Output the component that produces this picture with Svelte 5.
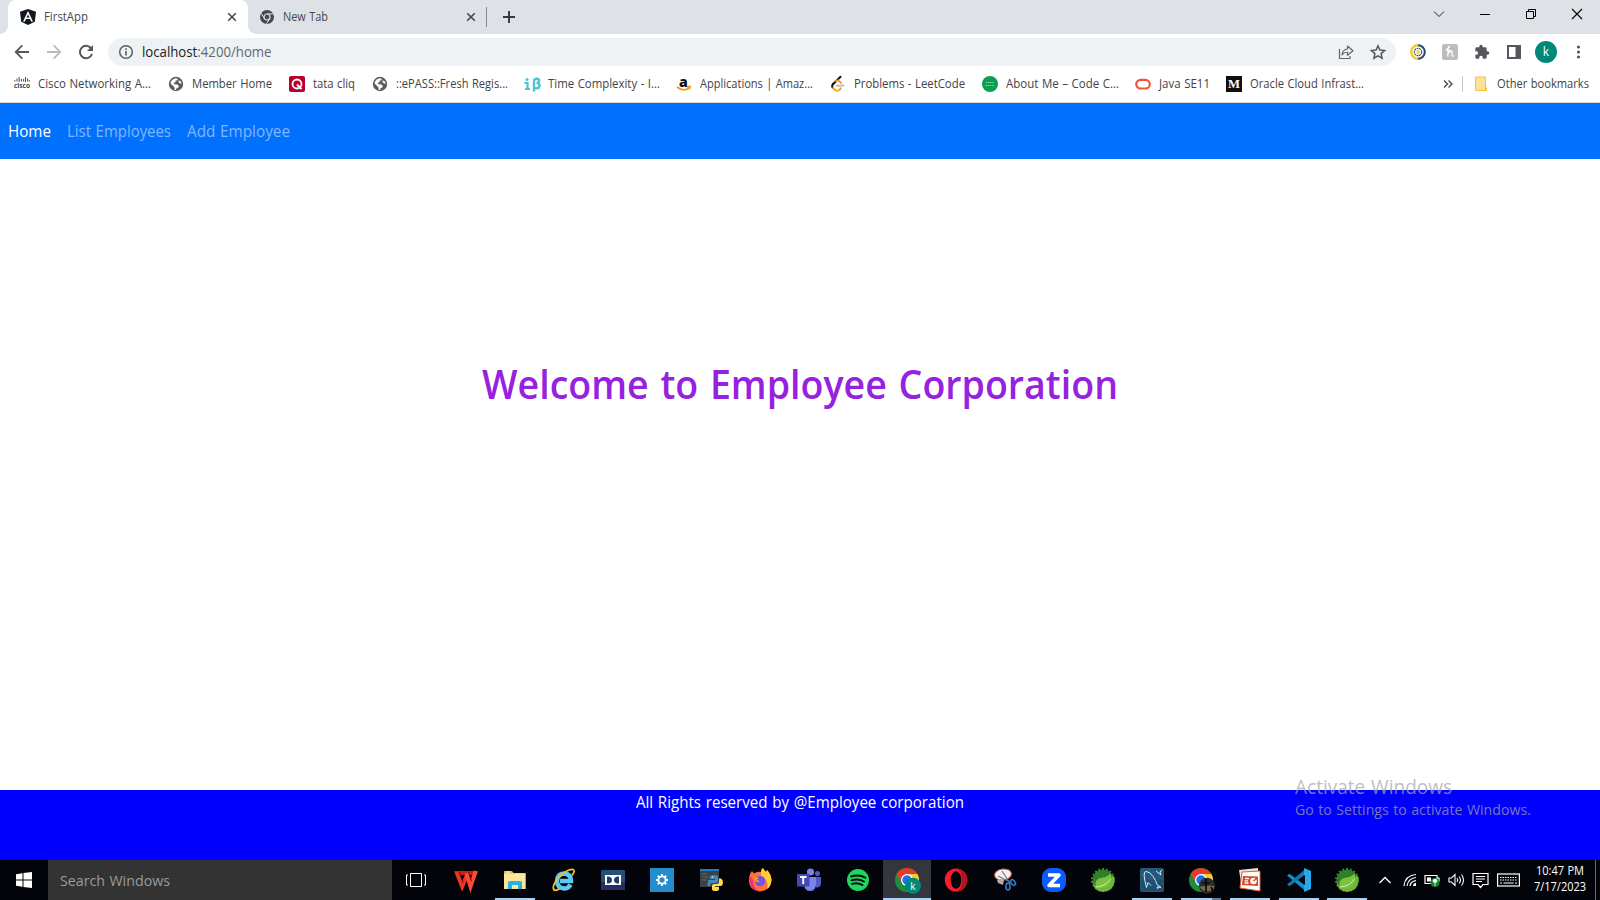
<script>
  // Condenses or widens a label so that it takes a given width in pixels.
  function fit(node, width) {
    const natural = node.getBoundingClientRect().width;
    node.style.transform = 'scaleX(' + width / natural + ')';
    node.style.marginRight = width - natural + 'px';
  }

  const bookmarks = [
    { icon: 'cisco', text: 'Cisco Networking A...', w: 113, box: 114 },
    { icon: 'globe', text: 'Member Home', w: 80, box: 81 },
    { icon: 'tata', text: 'tata cliq', w: 42, box: 43 },
    { icon: 'globe', text: '::ePASS::Fresh Regis...', w: 112, box: 112 },
    { icon: 'ib', text: 'Time Complexity - I...', w: 112, box: 112 },
    { icon: 'amazon', text: 'Applications | Amaz...', w: 113, box: 114 },
    { icon: 'leet', text: 'Problems - LeetCode', w: 111, box: 112 },
    { icon: 'cc', text: 'About Me – Code C...', w: 113, box: 113 },
    { icon: 'java', text: 'Java SE11', w: 51, box: 51 },
    { icon: 'medium', text: 'Oracle Cloud Infrast...', w: 114, box: 114 }
  ];

  const apps = [
    { icon: 'taskview' },
    { icon: 'wps' },
    { icon: 'folder', open: true },
    { icon: 'ie' },
    { icon: 'dolby' },
    { icon: 'gear' },
    { icon: 'python' },
    { icon: 'firefox' },
    { icon: 'teams' },
    { icon: 'spotify' },
    { icon: 'chromek', open: true, active: true },
    { icon: 'opera' },
    { icon: 'snip' },
    { icon: 'zoom' },
    { icon: 'spring' },
    { icon: 'mysql', open: true },
    { icon: 'chromeb', open: true, multi: true },
    { icon: 'ppt', open: true },
    { icon: 'code', open: true },
    { icon: 'spring', open: true }
  ];
  const teeth = Array.from({ length: 18 }, (_, i) => i * 20);
</script>

{#snippet cross()}
  <svg width="10" height="10" viewBox="0 0 10 10"><path d="M1.2 1.2l7.6 7.6M8.8 1.2L1.2 8.8" stroke="#45484d" stroke-width="1.6" /></svg>
{/snippet}

{#snippet chrome()}
  <circle cx="12" cy="12" r="12" fill="#1e8e3e" />
  <path d="M12 6h10.4A12 12 0 0 1 12 24l5.2-9z" fill="#fcc934" />
  <path d="M1.6 6A12 12 0 0 1 22.4 6H12L6.800 15z" fill="#e33b2e" />
  <circle cx="12" cy="12" r="6" fill="#fff" />
  <circle cx="12" cy="12" r="4.700" fill="#1a73e8" />
{/snippet}

{#snippet bookmarkIcon(name)}
  <svg width="16" height="16" viewBox="0 0 16 16">
    {#if name === 'cisco'}
      <path d="M.8 4v1.500M3 2.500v3M5.200 1v5M7.400 3v2.500M9.600 3v2.500M11.500 1v5M13.500 2.500v3M15.300 4v1.500" stroke="#4a4a4a" stroke-width="1" />
      <text x="0" y="12" font-size="7" font-weight="700" fill="#444" textLength="16" lengthAdjust="spacingAndGlyphs">cisco</text>
    {:else if name === 'globe'}
      <circle cx="8" cy="8" r="7.200" fill="#5a5e63" />
      <path d="M7.500 2.300l2.300.4-.4 1.500-2 .5.2 1.600-2.200.7 1 1.300 3 .2 1.500 1.400-.8 1.800-1.600.6-.5 1.800-1.400-.2v-2.200L5 9.800 2.500 7.500l.6-2.200 2-2z" fill="#fff" />
      <path d="M10.500 4.500l2 .4 1.200 2.800-1.700-.2-1.500-1.500z" fill="#fff" />
    {:else if name === 'tata'}
      <rect width="16" height="16" rx="2" fill="#b9002b" />
      <circle cx="8" cy="8" r="4.500" fill="none" stroke="#fff" stroke-width="1.800" />
      <path d="M8 8.500l4.600 4.700" stroke="#fff" stroke-width="1.900" />
    {:else if name === 'ib'}
      <path d="M.5 7h3v6M1 13h5" stroke="#4bc4d3" stroke-width="2.200" fill="none" />
      <circle cx="3" cy="3.500" r="1.500" fill="#4bc4d3" />
      <path d="M10 15.500V5q0-2.300 2.500-2.300t2.500 2.100q0 2-2.500 2.200 3.200 0 3 2.800-.5 2.700-3 2.500-1.600 0-2.500-1" stroke="#4bc4d3" stroke-width="2.400" fill="none" />
    {:else if name === 'amazon'}
      <text x="3" y="10.500" font-size="14" font-weight="800" fill="#111">a</text>
      <path d="M1 11q6.500 5 12 1.200M11 10.800l3-.4-.5 2.800" stroke="#f7981d" stroke-width="1.700" fill="none" />
    {:else if name === 'leet'}
      <path d="M10.500.8L3 8.300" stroke="#111" stroke-width="2" stroke-linecap="round" />
      <path d="M3.500 7.500Q.8 10 3.300 12.200" stroke="#111" stroke-width="2" fill="none" />
      <path d="M3.200 12l2 2q2 1.500 4 0l1.700-1.700M6.200 5.200q1.800-1.300 3.500.3l1.500 1.500" stroke="#f5a623" stroke-width="2" fill="none" stroke-linecap="round" />
      <path d="M6.500 9.700h7" stroke="#b8b8b8" stroke-width="1.800" stroke-linecap="round" />
    {:else if name === 'cc'}
      <circle cx="8" cy="8" r="8" fill="#0a9e50" />
      <path d="M4 6.500h8M3.500 9.500h9" stroke="#7fd5a6" stroke-width="1.200" stroke-dasharray="1.500 .6" />
    {:else if name === 'java'}
      <rect x="1.200" y="3.900" width="13.600" height="8.600" rx="4.300" fill="none" stroke="#f8503f" stroke-width="2.200" />
    {:else if name === 'medium'}
      <rect width="16" height="16" fill="#12100e" />
      <text x="2" y="12" class="serif" font-size="12.500" font-weight="700" fill="#fff" textLength="12" lengthAdjust="spacingAndGlyphs">M</text>
    {/if}
  </svg>
{/snippet}

{#snippet appIcon(name)}
  <svg width="24" height="24" viewBox="0 0 24 24">
    {#if name === 'taskview'}
      <path d="M6.500 5.500h11v13h-11zM4 7H2.500v10H4M20 7h1.500v10H20" fill="none" stroke="#fff" />
    {:else if name === 'wps'}
      <path d="M0 3h24l-1.500 4H3.500L2 7z" fill="#c81d12" />
      <path d="M2.500 4L8.200 18.500 13 7" fill="none" stroke="#f03524" stroke-width="4" />
      <path d="M12.500 5l4 13.500L21.800 3" fill="none" stroke="#ff4a33" stroke-width="4" />
      <path d="M4.800 4l4.500 11M14.500 4l3 9" stroke="#6f0d08" stroke-width="1" />
    {:else if name === 'folder'}
      <path d="M1 3h8l1.500 2H22.500v16H1z" fill="#e9b93d" />
      <path d="M1 5.500h21.500V21H1z" fill="#fce69a" />
      <path d="M5 21v-6q0-2 2-2h10q2 0 2 2v6h-4v-4H9v4z" fill="#28afe8" />
      <path d="M3 4h4" stroke="#fff" />
    {:else if name === 'ie'}
      <path d="M18.500 16.500Q16.500 20.500 12 20.500 5.200 20 5 13 5.500 5.800 12 5.500q7 .5 7 7.500H8" fill="none" stroke="#5cc8f3" stroke-width="4.500" />
      <path d="M20 7.500Q24 2 20.500 1.400 16 1 8 8 0 17 1.500 21q1.500 3 6-.5" fill="none" stroke="#f3c32b" stroke-width="1.800" />
    {:else if name === 'dolby'}
      <rect y="2" width="24" height="20" rx="1" fill="#245078" />
      <path d="M0 14h24v8H0z" fill="#282d65" />
      <rect x="4" y="7" width="16" height="10" fill="#fff" />
      <path d="M6 8.500h1.500q3.500.5 3.500 3.500t-3.500 3.500H6zM18 8.500h-1.500q-3.500.5-3.500 3.500t3.500 3.500H18z" fill="#203d68" />
    {:else if name === 'gear'}
      <rect width="24" height="24" fill="#248dcd" />
      {#each [0, 45, 90, 135, 180, 225, 270, 315] as a}
        <rect x="11" y="6" width="2" height="3" fill="#fff" transform="rotate({a} 12 12)" />
      {/each}
      <circle cx="12" cy="12" r="3.600" fill="none" stroke="#fff" stroke-width="1.800" />
    {:else if name === 'python'}
      <path d="M1 1h19v18H1z" fill="#3c4146" /><path d="M1 1h19v2H1z" fill="#1682c5" />
      <path d="M3 6h5M4 9h6M3 12h4" stroke="#54764b" />
      <path d="M9 15v-3h7v-1h-5V9q0-2 4-2t4 2v4q0 2-2 2h-4q-2 0-2 3H9q-1-.5-1-2z" fill="#4588be" />
      <path d="M20 10.500h2q2 1 2 4t-2 3.500h-6v1h4v2q0 2-3.500 2T13 21v-3q0-2 2-2h3q2 0 2-2z" fill="#ffda4b" />
      <circle cx="13.300" cy="9" r=".7" fill="#fff" />
    {:else if name === 'firefox'}
      <path d="M2 6q1-1.500 2-3l2 2.500q3-2.500 7-1.500 0-3 2-4 1 2.500 3 4 1-1 1-2 4 4 4.500 10Q23 22 12 23.500 1 22.500 1 12.500 1 9 2 6z" fill="#ff7139" />
      <path d="M13 4q0-3 2-4 1 2.500 3 4l1-2q4 4 4.500 10-.5 6.500-4.500 9 1.500-6-1-9-2-3-5-3z" fill="#ffcf35" />
      <path d="M2 8q-2 13 9 15.500Q4 19 5 12z" fill="#f52b70" />
      <circle cx="12" cy="13" r="5.300" fill="#7353e4" /><path d="M6 8q2 2 5 1.500L9 12l3 1.500Q9 16 6 12z" fill="#ff8d30" />
    {:else if name === 'teams'}
      <circle cx="13.500" cy="4" r="3.600" fill="#7b83eb" /><circle cx="20.500" cy="5.500" r="2.500" fill="#5059c9" />
      <path d="M17 9h7v7q-1 4-5 3.500z" fill="#5059c9" /><path d="M7 9h12v8q-1 6-6 6t-6-6z" fill="#7b83eb" />
      <rect y="6" width="12.500" height="12.500" rx="1" fill="#4049b4" /><path d="M3 9h6.500M6.200 9v7" stroke="#fff" stroke-width="1.900" />
    {:else if name === 'spotify'}
      <circle cx="12" cy="12" r="11" fill="#1ed760" />
      <path d="M5 8.500q8-2.500 14.500 1.300M5.500 12.300q7-2 12.500 1.200M6 15.800q6-1.500 10.500 1.200" fill="none" stroke="#050c08" stroke-width="1.900" stroke-linecap="round" />
    {:else if name === 'chromek'}
      {@render chrome()}
      <circle cx="18" cy="17.800" r="8" fill="#00897b" /><text x="15.300" y="21.500" font-size="10" fill="#fff">k</text>
    {:else if name === 'opera'}
      <ellipse cx="12" cy="12" rx="11.200" ry="11.500" fill="#f91d2d" />
      <path d="M12 .5a11.500 11.500 0 0 1 0 23q6-2 6-11.500T12 .5" fill="#b4131f" /><ellipse cx="12" cy="12" rx="5.300" ry="8.700" fill="#020407" />
    {:else if name === 'snip'}
      <ellipse cx="10" cy="6.500" rx="8.500" ry="5.500" fill="#f6f1f1" stroke="#c94b48" transform="rotate(-8 10 6.500)" />
      <path d="M9 3l8 12M5 8l12 6" stroke="#707580" stroke-width="1.200" />
      <path d="M4 12q4-2 7 0l-1 5-5-2z" fill="#b8aaa9" />
      <ellipse cx="20" cy="14.500" rx="2" ry="3" fill="none" stroke="#2b7cc4" stroke-width="1.700" transform="rotate(-40 20 14.500)" /><ellipse cx="15" cy="18.500" rx="2" ry="3.500" fill="none" stroke="#2b7cc4" stroke-width="1.700" />
    {:else if name === 'zoom'}
      <rect width="24" height="24" rx="9" fill="#0b5cff" />
      <path d="M6 7h11L7 17.500h11" fill="none" stroke="#fff" stroke-width="3.600" stroke-linejoin="round" />
    {:else if name === 'spring'}
      {#each teeth as a}<rect x="11" y="0" width="2" height="4" fill="#35862f" transform="rotate({a} 12 12)" />{/each}
      <circle cx="12" cy="12" r="10.500" fill="#2f8029" />
      <path d="M1 13q2 11 11 11 11-1 11.700-12 0-2-1.500-5-2 4-8 5.500Q5 14 4.500 19z" fill="#6db83b" />
      <path d="M4.500 19Q3 11 10.500 9.800 17 9 19.500 5.500q2.500 6-1 11Q13 22 4.500 19z" fill="#7cc142" />
      <path d="M4.500 19Q14 19 19.500 11" fill="none" stroke="#d5efbf" stroke-width=".9" />
    {:else if name === 'mysql'}
      <rect width="24" height="24" rx="2" fill="#24587d" /><path d="M1 12h22v11H1z" fill="#1b4463" opacity=".5" />
      <path d="M6.500 19.500Q2 3 6 3.500q4 0 7 5 3 4 4 8l4 3-4-.5 1 2M6.500 19.500l1.500-5 3 3M16 3l5 4-1-3 2-2" fill="none" stroke="#dce9f1" stroke-width="1" />
    {:else if name === 'chromeb'}
      {@render chrome()}
      <circle cx="18" cy="17.800" r="8" fill="#292f30" /><path d="M10.500 19q7-2 15-1l-1 3q-5 4-11 1z" fill="#7e6a50" />
      <path d="M17 11v13M13.500 15h7M22 19l2 4" stroke="#080a0b" stroke-width="1.700" />
    {:else if name === 'ppt'}
      <path d="M1 2L20 0v20L4 21z" fill="#f4dfd7" /><path d="M4 4l18-1v20L2 20z" fill="#fff" stroke="#d8603d" />
      <path d="M5 8l15 .5v9.500L4 17z" fill="#d6451f" /><path d="M7 10.500h4M6.500 12.800h3.500M6.500 15h4" stroke="#fff" stroke-width="1.300" />
      <circle cx="15.500" cy="13" r="3.300" fill="#fff" /><path d="M15.500 13l3-2.500" stroke="#d6451f" stroke-width="1.500" />
    {:else if name === 'code'}
      <path d="M0 7.500l2.500-1.800L19 18v5.500z" fill="#168fd0" /><path d="M0 16.500l2.500 1.800L19 6V.5z" fill="#0f78b8" />
      <path d="M17 0l7 3v18l-7 3z" fill="#29a9ed" /><path d="M18 7v10l-6.500-5z" fill="#05080c" />
    {/if}
  </svg>
{/snippet}

<div class="screen">
  <header class="tabs">
    <div class="tab current">
      <svg class="fav" width="16" height="16" viewBox="0 0 16 16"><path d="M8 0l8 2.700-1.200 10L8 16l-6.800-3.300L0 2.700z" fill="#111820" /><path d="M8 2l-5 10.500h1.900l1-2.500h4.200l1 2.500H13zM8 5.400L9.500 8.500h-3z" fill="#fff" /></svg>
      <span class="title"><span class="fit" use:fit={44}>FirstApp</span></span>
      <span class="shut">{@render cross()}</span>
    </div>
    <div class="tab second">
      <svg class="fav" width="14" height="14" viewBox="0 0 14 14"><circle cx="7" cy="7" r="7" fill="#46494e" /><circle cx="7" cy="7" r="3" fill="#46494e" stroke="#dee1e6" stroke-width="1.200" /><path d="M7 3.900h6.300M4.300 8.500L1.100 3.200M9.700 8.500l-3.200 5.300" stroke="#dee1e6" stroke-width="1" /></svg>
      <span class="title"><span class="fit" use:fit={45}>New Tab</span></span>
      <span class="shut">{@render cross()}</span>
    </div>
    <i class="rule"></i>
    <svg class="plus" width="14" height="14" viewBox="0 0 14 14"><path d="M7 1v12M1 7h12" stroke="#35383c" stroke-width="1.900" /></svg>
    <div class="controls">
      <span><svg width="12" height="12" viewBox="0 0 12 12"><path d="M1 3.500l5 5 5-5" fill="none" stroke="#222" /></svg></span>
      <span><svg width="12" height="12" viewBox="0 0 12 12"><path d="M1 6.500h10" stroke="#000" /></svg></span>
      <span><svg width="12" height="12" viewBox="0 0 12 12"><path d="M1.500 3.500h7v7h-7zM3.500 3.500v-2h7v7h-2" fill="none" stroke="#000" /></svg></span>
      <span><svg width="12" height="12" viewBox="0 0 12 12"><path d="M1 1l10 10M11 1L1 11" stroke="#000" stroke-width="1.100" /></svg></span>
    </div>
  </header>

  <div class="toolbar">
    <span class="btn"><svg width="16" height="16" viewBox="0 0 16 16"><path d="M15 8H2M8.300 1.300L1.700 8l6.600 6.700" fill="none" stroke="#54575c" stroke-width="1.800" /></svg></span>
    <span class="btn"><svg width="16" height="16" viewBox="0 0 16 16"><path d="M1 8h13M7.700 1.300L14.300 8l-6.600 6.700" fill="none" stroke="#b9bbbe" stroke-width="1.800" /></svg></span>
    <span class="btn"><svg width="16" height="16" viewBox="0 0 16 16"><path d="M13.200 4.500A6.200 6.200 0 1 0 14 10" fill="none" stroke="#54575c" stroke-width="2" /><path d="M15 1v6H9z" fill="#54575c" /></svg></span>
    <div class="omnibox">
      <svg width="16" height="16" viewBox="0 0 16 16"><circle cx="8" cy="8" r="6.300" fill="none" stroke="#5a5d62" stroke-width="1.500" /><path d="M8 7v4.500M8 4.300v1.600" stroke="#5a5d62" stroke-width="1.600" /></svg>
      <span class="url"><span class="fit" use:fit={129.5}>localhost<em>:4200/home</em></span></span>
      <span class="btn"><svg width="16" height="16" viewBox="0 0 16 16"><path d="M1.500 5v9.500H12V12" fill="none" stroke="#63666b" stroke-width="1.200" /><path d="M4 11q.5-5.500 5.500-6V2L15 6.800l-5.500 4.500v-3Q6 8 4 11z" fill="none" stroke="#63666b" stroke-width="1.200" stroke-linejoin="round" /></svg></span>
      <span class="btn"><svg width="16" height="16" viewBox="0 0 16 16"><path d="M8 1.800l1.900 4.300 4.700.4-3.500 3.100 1 4.600L8 11.800l-4.100 2.400 1-4.600L1.400 6.500l4.700-.4z" fill="none" stroke="#54575c" stroke-width="1.500" /></svg></span>
    </div>
    <div class="ext">
      <span class="btn"><svg width="16" height="16" viewBox="0 0 16 16"><path d="M8 1.200a6.800 6.800 0 0 0 0 13.600" fill="none" stroke="#f6c935" stroke-width="2.400" /><path d="M8 1.200a6.800 6.800 0 0 1 0 13.600" fill="none" stroke="#2d4962" stroke-width="2" /><circle cx="8" cy="8" r="3.700" fill="none" stroke="#385877" stroke-width="1.200" stroke-dasharray="2 .6" /><ellipse cx="8" cy="8" rx="1.700" ry="2.600" fill="#f6d44c" /></svg></span>
      <span class="btn"><svg width="16" height="16" viewBox="0 0 16 16"><rect width="16" height="16" rx="2" fill="#bdbdbd" /><path d="M4 5.500Q7.500 4 7.500 2.800q-1-.8-1.300 1.200L5.800 12.500M6 9.500q4-4 4.200-1.500l-.2 3.500q.8 1.500 2 0M4.300 6.500H9" fill="none" stroke="#fff" stroke-width="1.200" /></svg></span>
      <span class="btn"><svg width="16" height="16" viewBox="0 0 24 24"><path d="M20.500 11H19V7a2 2 0 0 0-2-2h-4V3.500a2.500 2.500 0 0 0-5 0V5H4a2 2 0 0 0-2 2v3.800h1.500a2.700 2.700 0 0 1 0 5.400H2V20a2 2 0 0 0 2 2h3.800v-1.500a2.700 2.700 0 0 1 5.400 0V22H17a2 2 0 0 0 2-2v-4h1.500a2.500 2.500 0 0 0 0-5z" fill="#54575c" /></svg></span>
      <span class="btn"><svg width="16" height="16" viewBox="0 0 16 16"><path d="M1 1h14v14H1zM3 3v10h6.500V3z" fill="#54575c" fill-rule="evenodd" /></svg></span>
      <span class="btn"><b class="avatar">k</b></span>
      <span class="btn"><svg width="16" height="16" viewBox="0 0 16 16" fill="#54575c"><circle cx="8.500" cy="3" r="1.600" /><circle cx="8.500" cy="8" r="1.600" /><circle cx="8.500" cy="13" r="1.600" /></svg></span>
    </div>
  </div>

  <div class="bookmarks">
    {#each bookmarks as b}
      <div class="mark">
        {@render bookmarkIcon(b.icon)}
        <span class="label" style="width:{b.box}px"><span class="fit" use:fit={b.w}>{b.text}</span></span>
      </div>
    {/each}
    <div class="others">
      <svg width="10" height="10" viewBox="0 0 10 10"><path d="M1 1.500L4.500 5 1 8.500M5.500 1.500L9 5 5.500 8.500" fill="none" stroke="#4a4d51" stroke-width="1.400" /></svg>
      <i></i>
      <svg width="14" height="16" viewBox="0 0 14 16"><path d="M.5 1h10v10.500l1 .5v2.500H.500z" fill="#fde293" stroke="#f2c63d" /><path d="M10.500 10v4.500" stroke="#f2b92d" /></svg>
      <span class="label last"><span class="fit" use:fit={92}>Other bookmarks</span></span>
    </div>
  </div>

  <main>
    <nav>
      <a href="#home" class="on"><span class="fit" use:fit={43}>Home</span></a>
      <a href="#list"><span class="fit" use:fit={104}>List Employees</span></a>
      <a href="#add"><span class="fit" use:fit={103}>Add Employee</span></a>
    </nav>
    <section><h1><span class="fit" use:fit={636}>Welcome to Employee Corporation</span></h1></section>
    <footer><span class="fit" use:fit={328}>All Rights reserved by @Employee corporation</span></footer>
  </main>

  <div class="taskbar">
    <span class="start"><svg width="16" height="16" viewBox="0 0 16 16"><path d="M0 2.200l6.500-.9v6.200H0zM7.500 1.100L16 0v7.500H7.500zM0 8.500h6.500v6.200L0 13.800zM7.500 8.500H16V16l-8.500-1.100z" fill="#fff" /></svg></span>
    <div class="search"><span class="fit" use:fit={110}>Search Windows</span></div>
    <div class="apps">
      {#each apps as app}
        <span class="app" class:open={app.open} class:active={app.active} class:multi={app.multi}>{@render appIcon(app.icon)}</span>
      {/each}
    </div>
    <div class="tray">
      <svg width="14" height="14" viewBox="0 0 14 14"><path d="M1.500 10L7 4.500l5.500 5.500" fill="none" stroke="#fff" stroke-width="1.300" /></svg>
      <svg width="14" height="14" viewBox="0 0 14 14"><g fill="none" stroke="#fff" stroke-width="1.200"><path d="M1 13Q2 2.500 13 1.500M4 13Q5 5.500 13 4.500M7 13q.5-4.500 6-5.300" /></g><path d="M10 13q0-3 3-3v3z" fill="#fff" /></svg>
      <svg width="16" height="14" viewBox="0 0 16 14"><path d="M1 2.500h12v8H1zM13 5h2v3h-2" fill="none" stroke="#fff" stroke-width="1.200" /><path d="M3 4.500h4v4H3z" fill="#fff" /><circle cx="11" cy="9.500" r="4.500" fill="#128a29" /><path d="M11 13V8M9 8.500q0-2.500 2-2.500t2 2.500l-2 1z" stroke="#fff" fill="#fff" stroke-width=".8" /></svg>
      <svg width="17" height="14" viewBox="0 0 17 14"><path d="M1 5h2.500L7 1.500v11L3.500 9H1zM9 5q1.500 2 0 4M11 3.500q3 3.500 0 7M13.500 1.500q4 5.500 0 11" fill="none" stroke="#fff" stroke-width="1.100" /></svg>
      <svg width="17" height="17" viewBox="0 0 17 17"><path d="M1 1.500h15v11h-5L8.500 15.500 6 12.500H1zM4 4.500h9M4 7h9M4 9.500h6" fill="none" stroke="#fff" stroke-width="1.200" /></svg>
      <svg width="23" height="14" viewBox="0 0 23 14"><rect x=".6" y="1" width="21.800" height="12" fill="none" stroke="#fff" stroke-width="1.200" /><path d="M3 4.500h17M3 7h17" stroke="#fff" stroke-width="1.200" stroke-dasharray="1.500 1" /><path d="M3 10h2M6.500 10h10M18 10h2" stroke="#fff" stroke-width="1.200" /></svg>
    </div>
    <div class="clock">
      <div><span class="fit" use:fit={48}>10:47 PM</span></div>
      <div><span class="fit" use:fit={52}>7/17/2023</span></div>
    </div>
  </div>

  <div class="watermark">
    <div class="big"><span class="fit" use:fit={157}>Activate Windows</span></div>
    <div class="small"><span class="fit" use:fit={236}>Go to Settings to activate Windows.</span></div>
  </div>
</div>

<style>
  :global(body) { margin: 0; overflow: hidden; }
  .screen { position: relative; display: flex; flex-direction: column; width: 1600px; height: 900px; background: #fff; font-family: "Open Sans", "Noto Sans", sans-serif; font-size: 12px; overflow: hidden; white-space: nowrap; }
  .fit { display: inline-block; transform-origin: 0 50%; word-spacing: .05em; }
  svg { display: block; flex: none; overflow: visible; }
  .serif { font-family: "Liberation Serif", serif; }
  .tabs { display: flex; height: 34px; background: #dee1e6; padding-left: 8px; align-items: center; box-sizing: border-box; }
  .tab { display: flex; align-items: center; box-sizing: border-box; height: 34px; color: #45484d; line-height: 16px; }
  .current { width: 240px; padding: 0 11px 0 12px; background: #fff; border-radius: 8px 8px 0 0; position: relative; }
  .current::before, .current::after { content: ""; position: absolute; bottom: 0; width: 8px; height: 8px; }
  .current::before { left: -8px; background: radial-gradient(circle at 0 0, transparent 7.5px, #fff 8px); }
  .current::after { right: -8px; background: radial-gradient(circle at 100% 0, transparent 7.5px, #fff 8px); }
  .current .title { margin-left: 8px; }
  .second { width: 238px; padding: 0 10px 0 12px; }
  .second .title { margin-left: 9px; }
  .shut { margin-left: auto; }
  .rule { width: 1px; height: 20px; background: #85888d; }
  .plus { margin-left: 15px; }
  .controls { display: flex; margin-left: auto; height: 28px; align-self: flex-start; }
  .controls span { width: 46px; display: flex; align-items: center; justify-content: center; }
  .toolbar { display: flex; align-items: center; height: 36px; padding-left: 6px; }
  .btn { width: 32px; display: flex; justify-content: center; align-items: center; flex: none; }
  .omnibox { width: 1288px; height: 28px; border-radius: 14px; background: #eff2f4; margin-left: 6px; box-sizing: border-box; padding: 0 2px 0 10px; display: flex; align-items: center; }
  .url { margin-left: 8px; margin-right: auto; font-size: 14px; color: #202124; line-height: 20px; }
  .url em { font-style: normal; color: #63676c; }
  .ext { display: flex; margin-left: 6px; }
  .avatar { width: 22px; height: 22px; border-radius: 50%; background: #00897b; color: #fff; font-weight: 400; line-height: 21px; text-align: center; }
  .bookmarks { display: flex; align-items: center; height: 28px; padding: 0 11px 4px 14px; border-bottom: 1px solid #d5d8dc; gap: 16px; color: #3f4247; }
  .mark { display: flex; gap: 8px; align-items: center; }
  .label { line-height: 16px; }
  .others { margin-left: auto; display: flex; align-items: center; }
  .others i { width: 1px; height: 16px; background: #c3c6ca; margin: 0 12px 0 9px; }
  .last { width: 92px; margin-left: 8px; }
  main { display: flex; flex-direction: column; height: 757px; }
  nav { height: 56px; background: #0070ff; display: flex; align-items: center; gap: 16px; padding-left: 8px; box-sizing: border-box; font-size: 16px; line-height: 24px; }
  nav a { text-decoration: none; color: #80b8ff; }
  nav .on { color: #fff; }
  section { flex: 1; display: flex; justify-content: center; }
  h1 { margin: 198px 0 0; font-size: 39px; line-height: 54px; font-weight: 600; color: #9621df; }
  h1 .fit { word-spacing: 2px; }
  footer { height: 70px; background: #00f; color: #fff; text-align: center; font-size: 16px; line-height: 25px; }
  .taskbar { display: flex; height: 40px; background: #020409; color: #fff; }
  .start { width: 48px; display: flex; align-items: center; justify-content: center; }
  .search { width: 344px; background: #333; color: #999b9d; font-size: 15px; line-height: 40px; padding-left: 12px; box-sizing: border-box; }
  .apps { display: flex; gap: 1px; }
  .app { width: 48px; height: 40px; display: flex; align-items: center; justify-content: center; }
  .app:first-child { margin-right: 1px; }
  .app:last-child { margin-left: -1px; }
  .open { background: linear-gradient(#a5d3f7, #a5d3f7) center bottom / 40px 2px no-repeat; }
  .multi { background: linear-gradient(90deg, #a5d3f7 31px, #5d7d98 31px) center bottom / 40px 2px no-repeat; }
  .active { background: linear-gradient(#a5d3f7, #a5d3f7) center bottom / 48px 2px no-repeat, #33373c; }
  .start, .search, .apps, .app { flex: none; }
  .tray { display: flex; align-items: center; margin-left: 7px; gap: 7.500px; }
  .tray svg:nth-child(1) { margin-right: 3px; }
  .clock { margin-left: auto; margin-right: 4px; width: 72px; font-size: 12px; line-height: 16px; padding: 3px 0 0; text-align: center; border-right: 1px solid #686b70; box-sizing: border-box; height: 40px; }
  .watermark { position: absolute; left: 1295px; top: 774px; color: rgba(165, 165, 165, .72); font-size: 15px; line-height: 18px; }
  .watermark .big { font-size: 19.500px; line-height: 26px; }
</style>
